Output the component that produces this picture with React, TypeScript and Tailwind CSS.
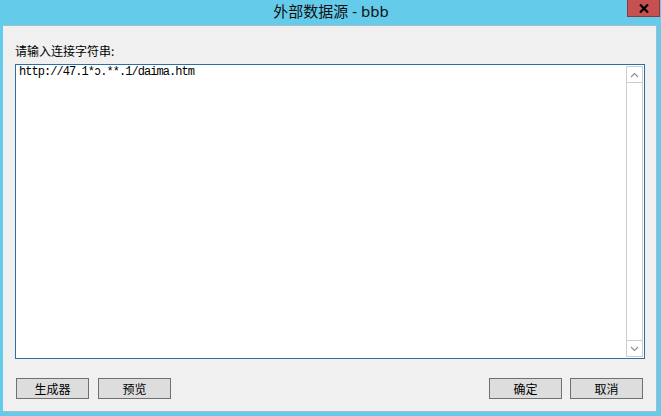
import React from "react";

const cjk = '"Noto Sans CJK SC", "Noto Sans", sans-serif';

function Btn({ label }: { label: string }) {
  return (
    <div
      className="w-[73px] h-[21px] bg-[#dddddd] border border-[#707070] flex items-center justify-center text-[12px] leading-none text-black"
      style={{ fontFamily: cjk }}
    >
      {label}
    </div>
  );
}

export default function App() {
  return (
    <div className="w-[661px] h-[416px] bg-[#65cbea] flex flex-col overflow-hidden">
      <div className="h-[25px] relative flex items-center justify-center shrink-0">
        <span
          className="text-[15px] leading-none text-[#111] pb-[3px] pl-[1px]"
          style={{ fontFamily: '"Noto Sans", "Noto Sans CJK SC", sans-serif' }}
        >
          外部数据源 - bbb
        </span>
        <div className="absolute right-[1px] top-0 w-[33px] h-[17px] bg-[#c75050] border border-t-0 border-[#8c3a3a] flex items-center justify-center">
          <svg width="10" height="9" viewBox="0 0 10 9">
            <path d="M1 0.5 L9 8.5 M9 0.5 L1 8.5" stroke="#000" strokeWidth="2.2" fill="none" />
          </svg>
        </div>
      </div>
      <div className="ml-[3px] mr-[4px] mb-[4px] flex-1 bg-[#f0f0f0] border-t border-r border-b border-[#a3bccb] flex flex-col">
        <div
          className="mt-[17px] ml-[12px] h-[16px] leading-[16px] text-[12px] text-black"
          style={{ fontFamily: cjk }}
        >
          请输入连接字符串:
        </div>
        <div className="mt-[5px] ml-[12px] w-[630px] h-[295px] bg-white border border-[#2d6fa3] flex">
          <div
            className="flex-1 pl-[3px] pt-[1px] text-[12px] leading-[13px] tracking-[-0.95px] text-black"
            style={{ fontFamily: '"Liberation Mono", "DejaVu Sans Mono", monospace' }}
          >
            http://47.1*ↄ.**.1/daima.htm
          </div>
          <div className="w-[17px] mt-[1px] mb-[1px] mr-[1px] border-x border-[#cdcdcd] flex flex-col">
            <div className="h-[17px] border-y border-[#cdcdcd] flex items-center justify-center">
              <svg width="9" height="6" viewBox="0 0 9 6">
                <path d="M1 5 L4.5 1.5 L8 5" stroke="#8f8f8f" strokeWidth="1.2" fill="none" />
              </svg>
            </div>
            <div className="flex-1" />
            <div className="h-[17px] border-y border-[#cdcdcd] flex items-center justify-center">
              <svg width="9" height="6" viewBox="0 0 9 6">
                <path d="M1 1 L4.5 4.5 L8 1" stroke="#8f8f8f" strokeWidth="1.2" fill="none" />
              </svg>
            </div>
          </div>
        </div>
        <div className="mt-[19px] ml-[13px] mr-[13px] flex">
          <div className="flex gap-[9px]">
            <Btn label="生成器" />
            <Btn label="预览" />
          </div>
          <div className="flex-1" />
          <div className="flex gap-[8px]">
            <Btn label="确定" />
            <Btn label="取消" />
          </div>
        </div>
      </div>
    </div>
  );
}
